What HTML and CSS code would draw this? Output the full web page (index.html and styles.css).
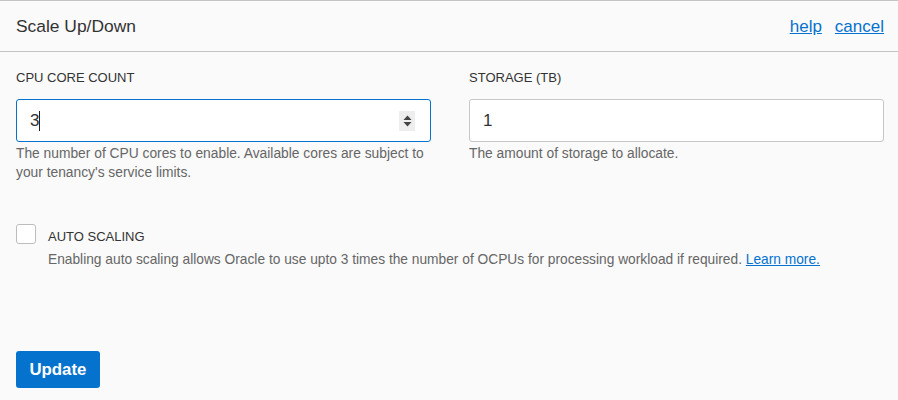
FILE: index.html
```html
<!DOCTYPE html>
<html>
<head>
<meta charset="utf-8">
<link rel="stylesheet" href="styles.css">
</head>
<body>
<div class="panel">
  <header class="header">
    <h1 class="title">Scale Up/Down</h1>
    <nav class="links">
      <a href="#" class="link">help</a>
      <a href="#" class="link">cancel</a>
    </nav>
  </header>
  <main class="body">
    <div class="fields">
      <div class="field">
        <label class="label">CPU CORE COUNT</label>
        <div class="input focused">
          <span class="value">3<span class="caret"></span></span>
          <span class="spin">
            <svg width="11" height="14" viewBox="0 0 11 14"><path d="M5.5 1.5 L9.5 6 H1.5 Z" fill="#444"/><path d="M1.5 8 H9.5 L5.5 12.5 Z" fill="#444"/></svg>
          </span>
        </div>
        <p class="help">The number of CPU cores to enable. Available cores are subject to your tenancy's service limits.</p>
      </div>
      <div class="field">
        <label class="label">STORAGE (TB)</label>
        <div class="input">
          <span class="value">1</span>
        </div>
        <p class="help">The amount of storage to allocate.</p>
      </div>
    </div>
    <div class="check-row">
      <span class="checkbox"></span>
      <div class="check-text">
        <div class="check-label">AUTO SCALING</div>
        <p class="check-desc">Enabling auto scaling allows Oracle to use upto 3 times the number of OCPUs for processing workload if required. <a href="#" class="link">Learn more.</a></p>
      </div>
    </div>
    <button class="btn">Update</button>
  </main>
</div>
</body>
</html>
```
FILE: styles.css
```css
* { box-sizing: border-box; }
html, body { margin: 0; padding: 0; }
body {
  background: #fafafa;
  font-family: "Liberation Sans", Arial, sans-serif;
  color: #333;
}
.panel {
  width: 898px;
  height: 400px;
  border-top: 1px solid #c4c4c4;
  background: #fafafa;
}
.header {
  height: 51px;
  border-bottom: 1px solid #c4c4c4;
  display: flex;
  align-items: center;
  justify-content: space-between;
  padding: 1px 14px 0 16px;
}
.title {
  margin: 0;
  font-size: 17.4px;
  font-weight: normal;
  color: #333;
}
.links {
  display: flex;
  gap: 13px;
  font-size: 17px;
}
.link {
  color: #0572ce;
  text-decoration: underline;
}
.body {
  padding: 16px 16px 0 16px;
}
.fields {
  display: grid;
  grid-template-columns: 415px 415px;
  column-gap: 38px;
}
.label {
  display: block;
  font-size: 13px;
  color: #333;
  line-height: 20px;
  margin-bottom: 11px;
}
.input {
  height: 43px;
  border: 1px solid #c7c7c7;
  border-radius: 3px;
  background: #fff;
  display: flex;
  align-items: center;
  justify-content: space-between;
  padding: 0 15px 0 13px;
}
.input.focused {
  border-color: #0572ce;
}
.value {
  font-size: 17px;
  color: #333;
  display: inline-flex;
  align-items: center;
}
.caret {
  display: inline-block;
  width: 1px;
  height: 20px;
  background: #222;
}
.spin {
  width: 16px;
  height: 20px;
  background: #eee;
  display: flex;
  align-items: center;
  justify-content: center;
}
.help {
  margin: 2px 0 0;
  font-size: 13.8px;
  line-height: 19px;
  color: #666;
}
.check-row {
  display: flex;
  margin-top: 40px;
}
.checkbox {
  width: 20px;
  height: 20px;
  border: 1px solid #bdbdbd;
  border-radius: 3px;
  background: #fff;
  flex: none;
  margin-top: 2px;
}
.check-text {
  margin-left: 12px;
}
.check-label {
  font-size: 13px;
  line-height: 20px;
  margin-top: 5px;
  color: #333;
}
.check-desc {
  margin: 3px 0 0;
  font-size: 13.75px;
  line-height: 20px;
  color: #666;
}
.btn {
  margin-top: 81px;
  height: 37px;
  padding: 0 13.5px;
  background: #0572ce;
  color: #fff;
  border: none;
  border-radius: 3px;
  font-family: "Liberation Sans", Arial, sans-serif;
  font-size: 16.8px;
  font-weight: bold;
}
```
